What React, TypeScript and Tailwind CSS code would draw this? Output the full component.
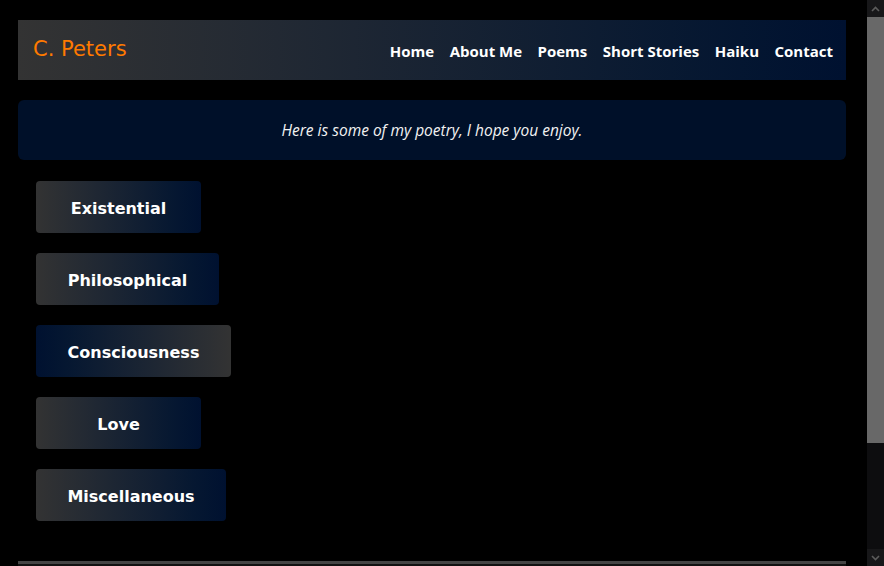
import React from "react";

const nav = ["Home", "About Me", "Poems", "Short Stories", "Haiku", "Contact"];

const categories = [
  { label: "Existential", width: "w-[165px]", bg: "bg-gradient-to-r from-[#333333] to-[#001130]" },
  { label: "Philosophical", width: "w-[183px]", bg: "bg-gradient-to-r from-[#333333] to-[#001130]" },
  { label: "Consciousness", width: "w-[195px]", bg: "bg-gradient-to-r from-[#001130] to-[#333333]" },
  { label: "Love", width: "w-[165px]", bg: "bg-gradient-to-r from-[#333333] to-[#001130]" },
  { label: "Miscellaneous", width: "w-[190px]", bg: "bg-gradient-to-r from-[#333333] to-[#001130]" },
];

// fake window scrollbar, the screenshot shows the browser's dark one
function Scrollbar() {
  return (
    <aside className="flex h-full w-[17px] shrink-0 flex-col bg-[#0d0d0f]">
      <div className="flex h-[17px] items-center justify-center bg-[#171719]">
        <svg width="9" height="6" viewBox="0 0 9 6">
          <path d="M1 5 L4.5 1.5 L8 5" fill="none" stroke="#5c5c5c" strokeWidth="1.6" />
        </svg>
      </div>
      <div className="h-[426px] bg-[#686868]" />
      <div className="flex-1" />
      <div className="flex h-[17px] items-center justify-center bg-[#171719]">
        <svg width="9" height="6" viewBox="0 0 9 6">
          <path d="M1 1 L4.5 4.5 L8 1" fill="none" stroke="#5c5c5c" strokeWidth="1.6" />
        </svg>
      </div>
    </aside>
  );
}

export default function App() {
  return (
    <div className="flex h-[566px] overflow-hidden bg-black font-['Open_Sans','Noto_Sans',sans-serif] text-white">
      <main className="min-w-0 flex-1 pt-[20px] pl-[18px] pr-[21px]">
        <header className="flex h-[60px] items-center justify-between bg-gradient-to-r from-[#333333] to-[#001130] pl-[15px] pr-[13px]">
          <span className="font-['Comic_Sans_MS','DejaVu_Sans',cursive] text-[21px] text-[#ff7a00]">C. Peters</span>
          <nav className="flex gap-[15.5px] pt-[2px] text-[15px] font-bold">
            {nav.map((item) => (
              <a key={item} href="#" className="leading-none">
                {item}
              </a>
            ))}
          </nav>
        </header>

        <section className="mt-[20px] flex h-[60px] items-center justify-center rounded-[6px] bg-[#001029]">
          <p className="pt-[1px] text-[15.5px] italic text-[#f2f2f2]">Here is some of my poetry, I hope you enjoy.</p>
        </section>

        <div className="mt-[21px] flex flex-col gap-[20px] pl-[18px]">
          {categories.map((c) => (
            <button
              key={c.label}
              className={`flex h-[52px] items-center justify-center rounded-[4px] pt-[3px] font-['DejaVu_Sans',sans-serif] text-[16px] font-bold ${c.width} ${c.bg}`}
            >
              {c.label}
            </button>
          ))}
        </div>

        <footer className="mt-[40px] h-[60px] border-t-[3px] border-[#444444] bg-[#111111]" />
      </main>
      <Scrollbar />
    </div>
  );
}
